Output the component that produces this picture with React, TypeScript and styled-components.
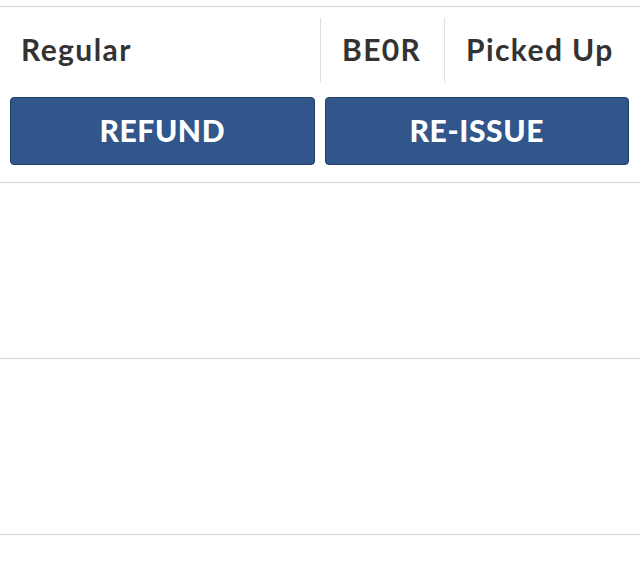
import React from "react";
import styled, { createGlobalStyle } from "styled-components";

const Global = createGlobalStyle`
  html, body { margin: 0; padding: 0; background: #fff; }
  body { font-family: Lato, "Open Sans", sans-serif; }
`;

const Page = styled.div`
  padding-top: 6px;
`;

const Row = styled.div<{ $h: number }>`
  border-top: 1px solid #d4d4d4;
  height: ${(p) => p.$h}px;
  box-sizing: border-box;
`;

const Info = styled.div`
  display: grid;
  grid-template-columns: 320px 124px 1fr;
  padding-top: 11px;
  height: 65px;
`;

const Cell = styled.div<{ $divider?: boolean }>`
  display: flex;
  align-items: center;
  padding-left: 21px;
  padding-bottom: 3px;
  font-size: 30px;
  font-weight: 700;
  letter-spacing: 1.4px;
  color: #333;
  border-left: ${(p) => (p.$divider ? "1px solid #e0e0e0" : "none")};
`;

const Actions = styled.div`
  display: grid;
  grid-template-columns: 1fr 1fr;
  gap: 10px;
  padding: 14px 11px 0 10px;
`;

const Button = styled.button`
  height: 68px;
  padding: 0 0 3px;
  background: #30568b;
  border: 1px solid #223d63;
  border-radius: 4px;
  color: #fff;
  font-family: Lato, sans-serif;
  font-weight: 900;
  font-size: 30px;
  letter-spacing: 0.6px;
`;

export default function App() {
  return (
    <>
      <Global />
      <Page>
        <Row $h={176}>
          <Info>
            <Cell>Regular</Cell>
            <Cell $divider>BE0R</Cell>
            <Cell $divider>Picked Up</Cell>
          </Info>
          <Actions>
            <Button>REFUND</Button>
            <Button>RE-ISSUE</Button>
          </Actions>
        </Row>
        <Row $h={176} />
        <Row $h={176} />
        <Row $h={53} />
      </Page>
    </>
  );
}
